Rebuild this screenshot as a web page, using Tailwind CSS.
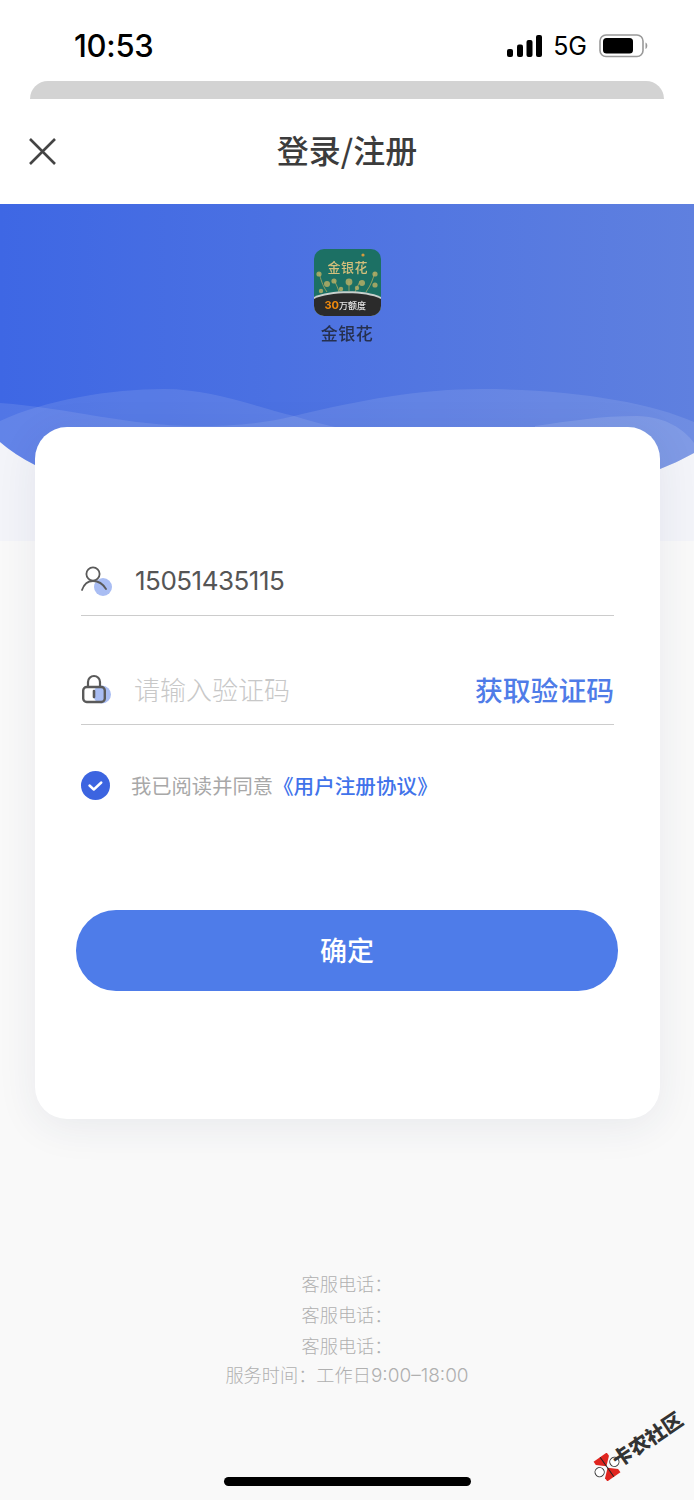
<!DOCTYPE html>
<html lang="zh">
<head>
<meta charset="utf-8">
<title>登录/注册</title>
<script src="https://cdn.jsdelivr.net/npm/@tailwindcss/browser@4"></script>
</head>
<body class="m-0">
<div class="relative w-[694px] h-[1500px] overflow-hidden flex flex-col bg-[#f9f9f9] font-['Inter','Noto_Sans_CJK_SC',sans-serif]">
  <!-- status bar -->
  <div class="h-[81px] shrink-0 bg-white flex items-start justify-between pl-[74px] pr-[46px] pt-[27px]">
    <span class="text-[31px] leading-[38px] font-medium tracking-[-0.3px] text-black">10:53</span>
    <div class="flex items-center gap-[11px] h-[38px]">
      <svg width="35" height="22" viewBox="0 0 35 22" class="fill-black"><rect x="0" y="14" width="6" height="8" rx="2"/><rect x="10" y="9.5" width="6" height="12.5" rx="2"/><rect x="19.5" y="5" width="6" height="17" rx="2"/><rect x="29" y="0" width="6" height="22" rx="2"/></svg>
      <span class="text-[25px] leading-none font-normal text-black">5G</span>
      <svg width="49" height="24" viewBox="0 0 49 24" class="ml-[1px]"><rect x="1" y="1" width="43" height="21.5" rx="6" fill="none" stroke="#999" stroke-width="1.6"/><rect x="4" y="4" width="30" height="15.5" rx="3.5" fill="#000"/><path d="M46.5 8.5c1.3.6 1.8 1.8 1.8 3.2s-.5 2.7-1.8 3.2z" fill="#999"/></svg>
    </div>
  </div>
  <!-- sheet edge -->
  <div class="h-[18px] shrink-0 bg-white px-[30px]"><div class="h-full bg-[#d3d3d3] rounded-t-[18px]"></div></div>
  <!-- nav -->
  <div class="h-[105px] shrink-0 bg-white flex items-center justify-center relative">
    <svg width="27" height="27" viewBox="0 0 27 27" class="absolute left-[29px] top-[39px]" fill="none" stroke="#444" stroke-width="2.6"><path d="M1 1 26 26M26 1 1 26"/></svg>
    <h1 class="text-[32px] leading-[40px] font-medium text-[#3c3c3c] font-['Noto_Sans_CJK_SC',sans-serif] relative top-[-2.5px]">登录/注册</h1>
  </div>
  <!-- hero -->
  <div class="relative h-[337px] shrink-0 bg-[#f3f4f9]">
    <svg class="absolute inset-0" width="694" height="337" viewBox="0 204 694 337">
      <defs>
        <linearGradient id="g" x1="0" x2="1" y1="0" y2="0"><stop offset="0" stop-color="#3e67e4"/><stop offset="1" stop-color="#5f80df"/></linearGradient>
      </defs>
      <path d="M0 204H694V453Q678 462 660 469L35 465Q15 455 0 442Z" fill="url(#g)"/>
      <path d="M0 403C70 408 130 426 195 426C230 426 262 424 294 416C360 400 420 389 482 389C570 389 650 402 694 422V453Q678 462 660 469L35 465Q15 455 0 442Z" fill="#fff" fill-opacity=".1"/>
      <path d="M0 421C45 400 110 389 164 389C210 389 250 405 294 416C310 421 325 425 340 428V465H35Q15 455 0 442Z" fill="#fff" fill-opacity=".1"/>
      <path d="M535 426C570 421 600 416 637 416C665 416 685 430 694 443V453Q678 462 660 469H535Z" fill="#fff" fill-opacity=".12"/>
    </svg>
    <div class="relative flex flex-col items-center pt-[45px]">
      <div class="relative w-[67px] h-[67px] rounded-[10px] overflow-hidden bg-[#1c7064] blur-[0.5px]">
        <span class="absolute left-[14px] top-[10px] text-[13px] leading-[16px] font-medium text-[#d3bf7b] whitespace-nowrap tracking-[0.5px]">金银花</span>
        <svg class="absolute inset-0" width="67" height="67" viewBox="0 0 67 67" fill="none">
          <circle cx="49" cy="6" r="1.6" fill="#d69a3d"/>
          <g stroke="#a5a55e" stroke-width="1" opacity=".85">
            <path d="M5 24c2 6 3 12 8 19M61 23c-2 7-4 13-9 20M20 31c2 4 4 8 5 12M35 32v10M46 32c-2 4-3 7-5 11"/>
          </g>
          <g fill="#b4ae66" opacity=".85">
            <circle cx="5" cy="25" r="2.6"/><circle cx="61" cy="25" r="2.6"/><circle cx="13" cy="35" r="3"/><circle cx="20" cy="32" r="2.6"/><circle cx="35" cy="33" r="3.4"/><circle cx="48" cy="34" r="3"/><circle cx="61" cy="36" r="2.6"/><circle cx="7" cy="42" r="2.2"/><circle cx="27" cy="40" r="2.2"/><circle cx="43" cy="39" r="2.2"/>
          </g>
          <path d="M0 48C15 41 50 40 67 48V67H0Z" fill="#c9d0cd"/>
          <path d="M0 50C15 43 50 42 67 50V67H0Z" fill="#2b2b2b"/>
        </svg>
        <span class="absolute left-[11px] bottom-[3px] text-[11px] leading-[14px] font-bold text-[#f08a0c] whitespace-nowrap">30<span class="text-[#e4e4e4] text-[9px] font-medium">万额度</span></span>
      </div>
      <span class="mt-[8px] text-[17px] leading-[21px] font-medium tracking-[0.5px] text-[#26304f] blur-[0.5px]">金银花</span>
    </div>
  </div>
  <!-- card -->
  <div class="relative z-10 mt-[-114px] mx-[35px] w-[625px] h-[692px] shrink-0 bg-white rounded-[32px] shadow-[0_8px_40px_rgba(40,50,90,0.08)] pt-[120px] pl-[41px] pr-[42px]">
    <div class="ml-[5px] mr-[4px] h-[69px] flex items-center border-b border-[#cccccc] pb-[1px]">
      <svg width="32" height="32" viewBox="0 0 32 32" fill="none" class="shrink-0 relative top-[-1px]">
        <circle cx="22" cy="23" r="9" fill="#a9bdf3"/>
        <circle cx="12" cy="10" r="6.6" stroke="#5a5a5a" stroke-width="1.8"/>
        <path d="M1 26C3 20 7 17 12 17S22 20 25 25" stroke="#5a5a5a" stroke-width="1.8" stroke-linecap="round"/>
      </svg>
      <span class="ml-[22px] text-[26px] leading-[32px] text-[#555] tracking-[-0.5px] font-normal">15051435115</span>
    </div>
    <div class="mt-[40px] ml-[5px] mr-[4px] h-[69px] flex items-center border-b border-[#cccccc] pb-[1px]">
      <svg width="32" height="32" viewBox="0 0 32 32" fill="none" class="shrink-0 relative top-[-1px]">
        <circle cx="21" cy="21.5" r="9" fill="#a9bdf3"/>
        <rect x="2.2" y="14" width="21.6" height="15" rx="3.5" stroke="#5a5a5a" stroke-width="2.4"/>
        <path d="M7 14V9a6 6 0 0 1 12 0v5" stroke="#5a5a5a" stroke-width="2.2"/>
        <path d="M13 18v6" stroke="#5a5a5a" stroke-width="2.6" stroke-linecap="round"/>
      </svg>
      <span class="ml-[21px] text-[26px] leading-[32px] text-[#c8c8c8] font-['Noto_Sans_CJK_SC',sans-serif] font-light relative top-[-1px]">请输入验证码</span>
      <span class="ml-auto text-[27.8px] leading-[34px] font-medium text-[#4f7ce8] font-['Noto_Sans_CJK_SC',sans-serif] relative top-[-1px]">获取验证码</span>
    </div>
    <div class="mt-[45px] ml-[5px] flex items-center h-[30px]">
      <svg width="29" height="29" viewBox="0 0 29 29" class="shrink-0"><circle cx="14.5" cy="14.5" r="14.5" fill="#3c64e0"/><path d="M8.5 14.5l4.3 4 7.5-7" fill="none" stroke="#fff" stroke-width="2.4" stroke-linecap="round" stroke-linejoin="round"/></svg>
      <span class="ml-[21px] text-[20.3px] leading-[28px] text-[#a8a8a8] font-['Noto_Sans_CJK_SC',sans-serif] font-normal whitespace-nowrap">我已阅读并同意</span>
      <span class="text-[20.6px] leading-[28px] text-[#4173ea] font-medium font-['Noto_Sans_CJK_SC',sans-serif] whitespace-nowrap">《用户注册协议》</span>
    </div>
    <button class="mt-[110px] flex items-center justify-center w-full h-[81px] rounded-[40px] bg-[#4e7ce9] text-white text-[27px] font-medium font-['Noto_Sans_CJK_SC',sans-serif]">确定</button>
  </div>
  <!-- footer -->
  <div class="mt-[149px] flex flex-col items-center text-[#b0b0b0] text-[18.2px] font-['Noto_Sans_CJK_SC',sans-serif] font-light">
    <p class="h-[31px] leading-[31px]">客服电话：</p>
    <p class="h-[31px] leading-[31px]">客服电话：</p>
    <p class="h-[31px] leading-[31px]">客服电话：</p>
    <p class="h-[27px] leading-[27px]">服务时间：工作日<span class="font-['Inter'] font-light text-[19px]">9:00–18:00</span></p>
  </div>
  <!-- home indicator -->
  <div class="absolute left-[224px] top-[1477px] w-[247px] h-[9px] rounded-full bg-black"></div>
  <!-- watermark -->
  <div class="absolute left-[590px] top-[1404px] w-[104px] h-[80px] pointer-events-none">
    <svg class="absolute left-[3px] top-[49px]" width="28" height="28" viewBox="0 0 28 28">
      <g transform="rotate(-35 14 14)">
        <circle cx="5" cy="14" r="4.6" fill="#fff" stroke="#333" stroke-width="1"/>
        <circle cx="23" cy="14" r="4.6" fill="#fff" stroke="#333" stroke-width="1"/>
        <path d="M14 13 6 6V2H22V6Z" fill="#e0251f"/>
        <path d="M14 15 6 22V26H22V22Z" fill="#e0251f"/>
        <path d="M14 2V26" stroke="#222" stroke-width="1"/>
      </g>
    </svg>
    <span class="absolute left-[17px] top-[23px] w-[80px] text-center text-[20px] leading-[24px] font-black text-[#333] whitespace-nowrap font-['Noto_Sans_CJK_SC',sans-serif] rotate-[-34deg]">卡农社区</span>
  </div>
</div>
</body>
</html>
